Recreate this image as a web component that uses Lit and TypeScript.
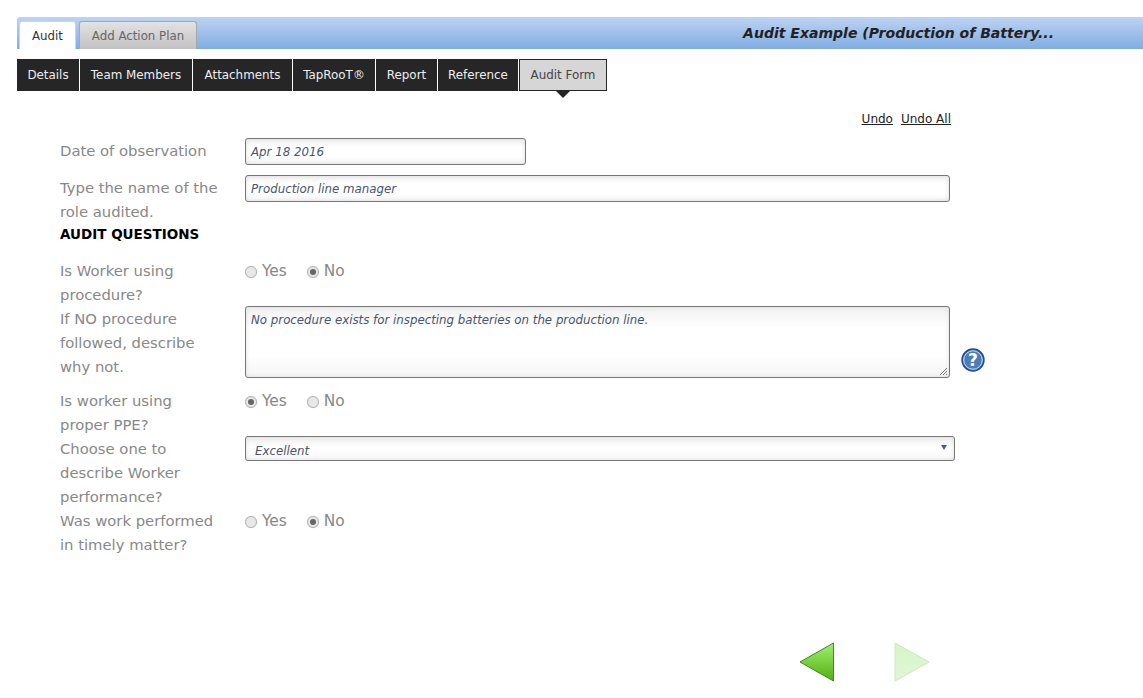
import { LitElement, html, css } from "lit";
import { customElement } from "lit/decorators.js";

const radio = (on: boolean, label: string) => html`<span class="opt"><span class="radio ${on ? "on" : ""}"></span>${label}</span>`;

@customElement("app-root")
export class AppRoot extends LitElement {
  static styles = css`
    :host { display: block; height: 698px; overflow: hidden; background: #fff; font-family: "DejaVu Sans", Verdana, sans-serif; box-sizing: border-box; padding-top: 17px; }
    .bar { margin-left: 17px; height: 32px; background: linear-gradient(#bdd3f2, #81ade3); border-radius: 3px 0 0 0; display: flex; align-items: flex-end; padding-left: 2px; }
    .tab { height: 28px; box-sizing: border-box; display: flex; align-items: center; justify-content: center; font-size: 11.8px; border: 1px solid #aaa; border-bottom: 0; border-radius: 3px 3px 0 0; }
    .tab.a { width: 57px; background: #fff; color: #333; border-color: #c5d5ea; }
    .tab.b { width: 118px; margin-left: 3px; background: linear-gradient(#e2e2e2, #c2c2c2); color: #666; border-color: #a8a8a8; }
    .title { margin-left: auto; margin-right: 89px; align-self: center; font-size: 14.04px; line-height: 35px; font-weight: bold; font-style: italic; color: #222; }
    nav { display: flex; margin: 10px 0 0 17px; gap: 1px; height: 32px; }
    nav a { background: #262626; color: #eee; font-size: 11.9px; display: flex; align-items: center; justify-content: center; box-sizing: border-box; }
    nav a.cur { position: relative; background: #d6d6d6; color: #444; border: 1px solid #262626; }
    nav a.cur::after { content: ""; position: absolute; left: 36px; top: 31px; border: 7px solid transparent; border-bottom: 0; border-top-color: #262626; }
    .undo { display: flex; justify-content: flex-end; gap: 8px; width: 934px; margin: 20px 0 0 17px; font-size: 12px; line-height: 16px; color: #222; }
    .undo span { text-decoration: underline; }
    form { display: grid; grid-template-columns: 185px 1fr; margin: 12px 0 0 60px; font-size: 14.8px; line-height: 24px; color: #888; align-items: start; }
    .d { width: 281px; height: 27px; }
    .t { width: 705px; height: 27px; }
    .field { box-sizing: border-box; border: 1px solid #777; border-radius: 3px; background: linear-gradient(#f0f0f0, #fff 30%, #fff 70%, #f4f4f4); box-shadow: inset 0 0 4px #ddd; font-size: 11.8px; font-style: italic; color: #46566e; line-height: 27px; padding: 0 5px; margin-top: -1px; }
    .head { grid-column: 1 / 3; font-size: 13.5px; font-weight: bold; color: #000; line-height: 20px; margin: 0 0 14px; height: 21px; }
    .opts { display: flex; gap: 20px; font-size: 15.4px; }
    .opt { display: flex; align-items: center; gap: 5px; }
    .radio { width: 12px; height: 12px; box-sizing: border-box; border-radius: 50%; border: 1px solid #b4b4b4; background: #e8e8e8; box-shadow: 0 0 1px #ccc; display: inline-flex; align-items: center; justify-content: center; margin-top: 2px; }
    .radio.on::after { content: ""; width: 6px; height: 6px; border-radius: 50%; background: #666; }
    .areawrap { display: flex; align-items: flex-end; gap: 11px; margin-top: -1px; }
    .area { width: 705px; height: 72px; margin: 0; position: relative; line-height: 27px; }
    .grip { position: absolute; right: 1px; bottom: 1px; }
    .help { margin-bottom: 6px; display: block; }
    .sel { width: 710px; height: 25px; line-height: 28px; padding-left: 9px; position: relative; background: linear-gradient(#eee, #fff 45%, #f8f8f8); }
    .caret { position: absolute; right: 7px; top: 8px; border: 3px solid transparent; border-bottom: 0; border-top: 5px solid #456080; }
    .nav2 { display: flex; margin: 85px 0 0 799px; gap: 59px; }
    .nav2 svg { display: block; }
  `;

  render() {
    return html`
      <div class="bar">
        <div class="tab a">Audit</div>
        <div class="tab b">Add Action Plan</div>
        <div class="title">Audit Example (Production of Battery...</div>
      </div>
      <nav>
        <a style="width:62px">Details</a>
        <a style="width:112px">Team Members</a>
        <a style="width:99px">Attachments</a>
        <a style="width:82px">TapRooT®</a>
        <a style="width:61px">Report</a>
        <a style="width:80px">Reference</a>
        <a class="cur" style="width:88px">Audit Form</a>
      </nav>
      <div class="undo"><span>Undo</span><span>Undo All</span></div>
      <form>
        <div style="height:37px">Date of observation</div>
        <div class="field d">Apr 18 2016</div>
        <div>Type the name of the<br />role audited.</div>
        <div class="field t">Production line manager</div>
        <div class="head">AUDIT QUESTIONS</div>
        <div>Is Worker using<br />procedure?</div>
        <div class="opts">${radio(false, "Yes")}${radio(true, "No")}</div>
        <div style="height:82px">If NO procedure<br />followed, describe<br />why not.</div>
        <div class="areawrap">
          <div class="field area">No procedure exists for inspecting batteries on the production line.
            <svg class="grip" width="10" height="10" viewBox="0 0 10 10"><path d="M9 2 2 9M9 5 5 9M9 8 8 9" stroke="#777" fill="none"/></svg>
          </div>
          <svg class="help" width="24" height="24" viewBox="0 0 24 24">
            <circle cx="12" cy="12" r="11" fill="#3a6ba8" stroke="#1f4f8f" stroke-width="1.4"/>
            <circle cx="12" cy="12" r="9.3" fill="#4d7db8" stroke="#d5e2f2" stroke-width="1"/>
            <text x="12" y="18" text-anchor="middle" font-size="17" font-weight="bold" fill="#fff" font-family="DejaVu Sans">?</text>
          </svg>
        </div>
        <div>Is worker using<br />proper PPE?</div>
        <div class="opts">${radio(true, "Yes")}${radio(false, "No")}</div>
        <div>Choose one to<br />describe Worker<br />performance?</div>
        <div class="field sel">Excellent<span class="caret"></span></div>
        <div>Was work performed<br />in timely matter?</div>
        <div class="opts">${radio(false, "Yes")}${radio(true, "No")}</div>
      </form>
      <div class="nav2">
        <svg width="36" height="40" viewBox="0 0 36 40">
          <defs><linearGradient id="g1" x1="0" y1="0" x2="0" y2="1"><stop offset="0" stop-color="#a0f070"/><stop offset="1" stop-color="#50b010"/></linearGradient>
          <linearGradient id="g2" x1="0" y1="0" x2="0" y2="1"><stop offset="0" stop-color="#d6f5c6"/><stop offset="1" stop-color="#e0f7d4"/></linearGradient></defs>
          <path d="M34.5 1 1 20 34.5 39Z" fill="url(#g1)" stroke="#3f8a18" stroke-linejoin="round"/>
        </svg>
        <svg width="36" height="40" viewBox="0 0 36 40">
          <path d="M1 1 35 20 1 39Z" fill="url(#g2)" stroke="#cfe6c4" stroke-linejoin="round"/>
        </svg>
      </div>
    `;
  }
}
